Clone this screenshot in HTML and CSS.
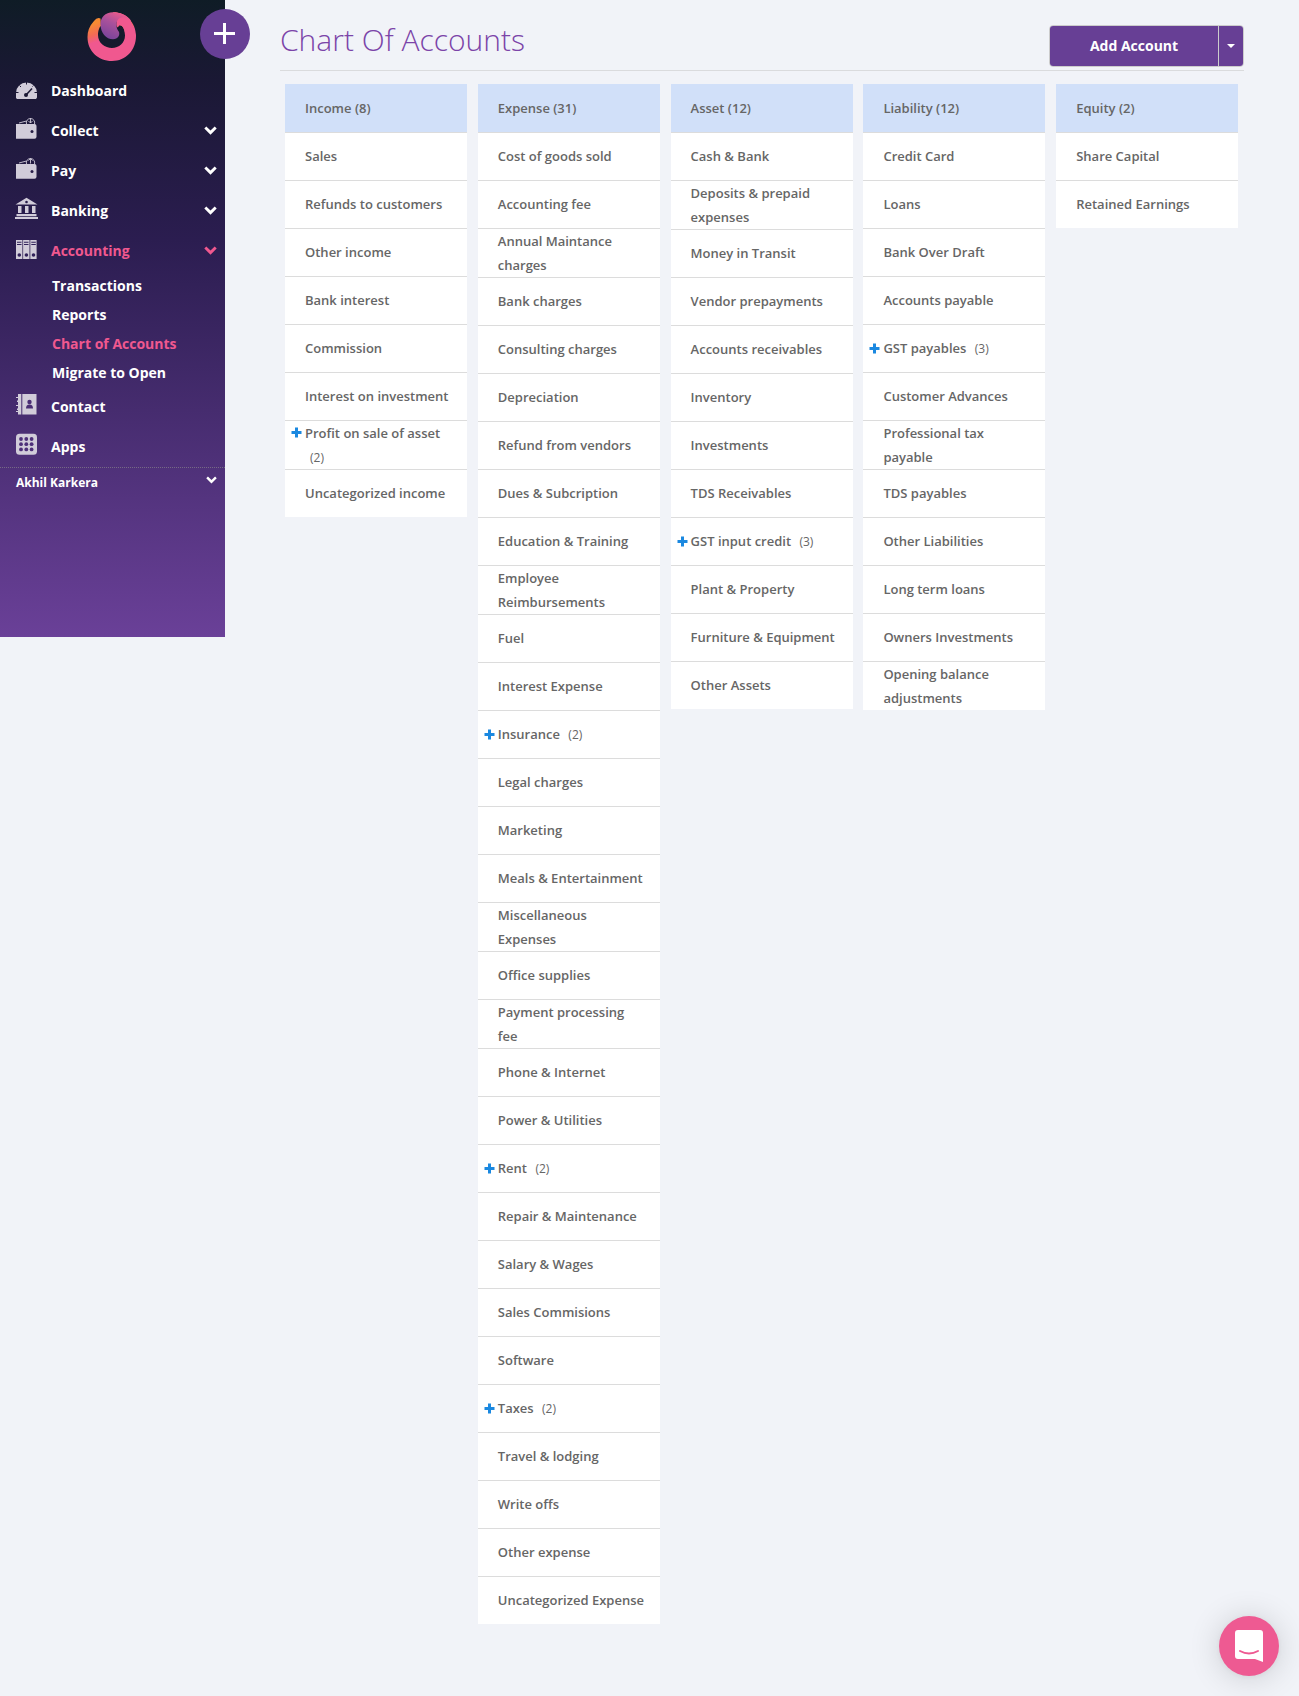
FILE: index.html
```html
<!DOCTYPE html>
<html lang="en">
<head>
<meta charset="utf-8">
<title>Chart Of Accounts</title>
<link rel="stylesheet" href="styles.css">
</head>
<body>
<svg class="defs" width="0" height="0" aria-hidden="true">
  <symbol id="chevron" viewBox="0 0 13 9"><path d="M.3 2.5 2.3.5l4.2 4.1L10.7.5l2 2-6.2 6.2z" fill="currentColor"/></symbol>
  <symbol id="plus" viewBox="0 0 11 11"><path d="M4 .5h3V4h3.5v3H7v3.500H4V7H.5V4H4z" fill="currentColor"/></symbol>
</svg>
<div class="app">
  <aside class="sidebar">
    <button class="create" aria-label="Create"><svg width="21" height="21" viewBox="0 0 21 21"><path d="M9 0h3v9h9v3h-9v9H9v-9H0V9h9z" fill="#fff"/></svg></button>
    <div class="brand">
      <svg width="49" height="50" viewBox="0 0 49 50">
        <defs>
          <linearGradient id="ring" x1="0" y1="0" x2=".35" y2="1"><stop offset=".25" stop-color="#f68b33"/><stop offset=".45" stop-color="#f26b55"/><stop offset=".6" stop-color="#f0588f"/></linearGradient>
          <linearGradient id="drop" x1=".85" y1="0" x2=".35" y2="1"><stop offset=".1" stop-color="#ea5a8d"/><stop offset=".5" stop-color="#a8519b"/><stop offset="1" stop-color="#7b449b"/></linearGradient>
        </defs>
        <path d="M13.500 6.500Q10 5 7 9 .5 16 .5 25C.5 39 11 49 25 49S49 38 49 24C49 10 38 .3 26 .3L30 10c-1 4 0 6 1 5 1-2 2-2 4-1 2 2 3 6 3 9.500C38 31 32 36 25 36S11 31 11 23c0-5 2-9 3-9z" fill="url(#ring)"/>
        <path d="M26 .3C33 .3 40 3 43.500 8L49 24 40 26 38 23C38 19 37 16 35 14 33 13 32 13 31 15 29 15 29 9 31 6z" fill="#f0588f"/>
        <path d="M26 .3C18 .3 13.500 6 13.500 12c0 9 5.500 15.300 12.500 15.300 5 0 7-4.300 6-7.300-1-2-2.500-3-2.500-7S31 6 35 5.500c3-.5 6 .5 8.500 2.500C38 2.500 32 .3 26 .3z" fill="url(#drop)"/>
      </svg>
    </div>
    <nav class="menu">
      <a class="item"><svg class="icon" viewBox="0 0 24 24"><path d="M1 21V16A10.500 10.500 0 0 1 22 16v4.500l-1 1.500H2z"/><g stroke="#1b1834" fill="none"><path d="M11.500 5v2.500M4.500 8.500l1.500 1.500M18.500 8.500l-1 1M1 15.500h2.500M22 15.500h-2.500"/><path d="M11 18l6-6.500" stroke-width="1.500"/></g><circle cx="11" cy="18" r="2" fill="#1b1834"/></svg><span>Dashboard</span></a>
      <a class="item"><svg class="icon" viewBox="0 0 24 24"><path d="M1 7h18.500q2 0 2 2v10.700q0 2-2 2H1z"/><path d="M4 6l7.500-2M11.500 7a4.200 4.200 0 1 1 8 0M15.500 1v5M13.500 4l2 2 2-2" fill="none" stroke="#d1ccd9" stroke-width=".9"/><circle cx="17" cy="14.500" r="1.500" fill="#251c43"/></svg><span>Collect</span><svg class="chev"><use href="#chevron"/></svg></a>
      <a class="item"><svg class="icon" viewBox="0 0 24 24"><path d="M1 7h18.500q2 0 2 2v10.700q0 2-2 2H1z"/><path d="M4 6l7.500-2M11.500 7a4.200 4.200 0 1 1 8 0M15.500 1.500v5M13.500 3.500l2-2 2 2" fill="none" stroke="#d1ccd9" stroke-width=".9"/><circle cx="17" cy="14.500" r="1.500" fill="#291d49"/></svg><span>Pay</span><svg class="chev"><use href="#chevron"/></svg></a>
      <a class="item"><svg class="icon" viewBox="0 0 24 24"><path fill-rule="evenodd" d="M11.500.8 22.500 7.500H.5zM11.500 3.700a1.300 1.300 0 1 0 .01 0zM3 9h3.500v7H3zM10 9h3.500v7H10zM17 9h3.500v7H17zM1.500 17h20v2.300h-20zM0 20h23v2H0z"/></svg><span>Banking</span><svg class="chev"><use href="#chevron"/></svg></a>
      <a class="item active"><svg class="icon" viewBox="0 0 24 24"><path d="M1 3h20.500v19H1z" opacity=".4"/><path d="M1 3h6v19H1zM8.200 3h6v19h-6zM15.500 3h6v19h-6z"/><g fill="#31215a"><path d="M2 4.800h4.500v1H2zM9 4.800h4.500v1H9zM16.300 4.800h4.500v1h-4.500zM2 7h4.500v1H2zM9 7h4.500v1H9zM16.300 7h4.500v1h-4.500z"/><circle cx="4.300" cy="18" r="1.800"/><circle cx="11.400" cy="18" r="1.800"/><circle cx="18.500" cy="18" r="1.800"/></g></svg><span>Accounting</span><svg class="chev"><use href="#chevron"/></svg></a>
      <div class="submenu">
        <a>Transactions</a>
        <a>Reports</a>
        <a class="active">Chart of Accounts</a>
        <a>Migrate to Open</a>
      </div>
      <a class="item"><svg class="icon" viewBox="0 0 24 24"><path d="M3 1h3.300v20.500H3zM7.300 1H21.500v20.500H7.300zM1 4h2v1H1zM2 7.500h2v1.500H2zM1 12h2v1H1zM2 15.500h2V17H2zM1 18h2v1H1z"/><g fill="#4a2e74"><circle cx="14.500" cy="9" r="2.200"/><path d="M11 15.500q0-4 3.500-4t3.500 4z"/></g></svg><span>Contact</span></a>
      <a class="item"><svg class="icon" viewBox="0 0 24 24"><rect x="1" y=".7" width="21" height="21" rx="3.500"/><g fill="#4e3079"><circle cx="6" cy="6" r="1.900"/><circle cx="11.300" cy="6" r="1.900"/><circle cx="16.600" cy="6" r="1.900"/><circle cx="6" cy="11.200" r="1.900"/><circle cx="11.300" cy="11.200" r="1.900"/><circle cx="16.600" cy="11.200" r="1.900"/><circle cx="6" cy="16.400" r="1.900"/><circle cx="11.300" cy="16.400" r="1.900"/><circle cx="16.600" cy="16.400" r="1.900"/></g></svg><span>Apps</span></a>
    </nav>
    <div class="user"><span>Akhil Karkera</span><svg class="chev"><use href="#chevron"/></svg></div>
  </aside>
  <main class="content">
    <header class="page-head">
      <h1>Chart Of Accounts</h1>
      <div class="split-button"><button class="add">Add Account</button><button class="caret" aria-label="More"></button></div>
    </header>
    <div class="columns">
      <section class="column">
        <h2>Income (8)</h2>
        <ul>
          <li><div>Sales</div></li>
          <li><div>Refunds to customers</div></li>
          <li><div>Other income</div></li>
          <li><div>Bank interest</div></li>
          <li><div>Commission</div></li>
          <li><div>Interest on investment</div></li>
          <li><div><svg class="plus"><use href="#plus"/></svg>Profit on sale of asset <span class="count">(2)</span></div></li>
          <li><div>Uncategorized income</div></li>
        </ul>
      </section>
      <section class="column">
        <h2>Expense (31)</h2>
        <ul>
          <li><div>Cost of goods sold</div></li>
          <li><div>Accounting fee</div></li>
          <li><div>Annual Maintance charges</div></li>
          <li><div>Bank charges</div></li>
          <li><div>Consulting charges</div></li>
          <li><div>Depreciation</div></li>
          <li><div>Refund from vendors</div></li>
          <li><div>Dues &amp; Subcription</div></li>
          <li><div>Education &amp; Training</div></li>
          <li><div>Employee Reimbursements</div></li>
          <li><div>Fuel</div></li>
          <li><div>Interest Expense</div></li>
          <li><div><svg class="plus"><use href="#plus"/></svg>Insurance <span class="count">(2)</span></div></li>
          <li><div>Legal charges</div></li>
          <li><div>Marketing</div></li>
          <li><div>Meals &amp; Entertainment</div></li>
          <li><div>Miscellaneous Expenses</div></li>
          <li><div>Office supplies</div></li>
          <li><div>Payment processing fee</div></li>
          <li><div>Phone &amp; Internet</div></li>
          <li><div>Power &amp; Utilities</div></li>
          <li><div><svg class="plus"><use href="#plus"/></svg>Rent <span class="count">(2)</span></div></li>
          <li><div>Repair &amp; Maintenance</div></li>
          <li><div>Salary &amp; Wages</div></li>
          <li><div>Sales Commisions</div></li>
          <li><div>Software</div></li>
          <li><div><svg class="plus"><use href="#plus"/></svg>Taxes <span class="count">(2)</span></div></li>
          <li><div>Travel &amp; lodging</div></li>
          <li><div>Write offs</div></li>
          <li><div>Other expense</div></li>
          <li><div>Uncategorized Expense</div></li>
        </ul>
      </section>
      <section class="column">
        <h2>Asset (12)</h2>
        <ul>
          <li><div>Cash &amp; Bank</div></li>
          <li><div>Deposits &amp; prepaid expenses</div></li>
          <li><div>Money in Transit</div></li>
          <li><div>Vendor prepayments</div></li>
          <li><div>Accounts receivables</div></li>
          <li><div>Inventory</div></li>
          <li><div>Investments</div></li>
          <li><div>TDS Receivables</div></li>
          <li><div><svg class="plus"><use href="#plus"/></svg>GST input credit <span class="count">(3)</span></div></li>
          <li><div>Plant &amp; Property</div></li>
          <li><div>Furniture &amp; Equipment</div></li>
          <li><div>Other Assets</div></li>
        </ul>
      </section>
      <section class="column">
        <h2>Liability (12)</h2>
        <ul>
          <li><div>Credit Card</div></li>
          <li><div>Loans</div></li>
          <li><div>Bank Over Draft</div></li>
          <li><div>Accounts payable</div></li>
          <li><div><svg class="plus"><use href="#plus"/></svg>GST payables <span class="count">(3)</span></div></li>
          <li><div>Customer Advances</div></li>
          <li><div>Professional tax payable</div></li>
          <li><div>TDS payables</div></li>
          <li><div>Other Liabilities</div></li>
          <li><div>Long term loans</div></li>
          <li><div>Owners Investments</div></li>
          <li><div>Opening balance adjustments</div></li>
        </ul>
      </section>
      <section class="column">
        <h2>Equity (2)</h2>
        <ul>
          <li><div>Share Capital</div></li>
          <li><div>Retained Earnings</div></li>
        </ul>
      </section>
    </div>
  </main>
</div>
<button class="chat" aria-label="Chat"><svg width="28" height="32" viewBox="0 0 28 32"><path d="M3 0h22q3 0 3 3v29l-8-3H3q-3 0-3-3V3q0-3 3-3z" fill="#fff"/><path d="M5 21q9 5 18 0" fill="none" stroke="#ee5a92" stroke-width="2" stroke-linecap="round"/></svg></button>
</body>
</html>
```
FILE: styles.css
```css
* { box-sizing: border-box; }
body {
  margin: 0;
  min-height: 1696px;
  background: #f1f3f8;
  color: #666;
  font: 600 13px/24px "Open Sans", sans-serif;
}
.defs { position: absolute; }
button { border: 0; padding: 0; font-family: inherit; }
.app { display: flex; align-items: flex-start; }

.sidebar {
  position: relative;
  flex: none;
  width: 225px;
  height: 637px;
  background: linear-gradient(#0f1c26 0, #1a1834 80px, #2b1d50 240px, #6a4098 637px);
  color: #fff;
}
.create {
  position: absolute;
  left: 199.5px;
  top: 8.5px;
  width: 50px;
  height: 50px;
  display: grid;
  place-items: center;
  border-radius: 50%;
  background: #673f95;
}
.brand { height: 71px; padding: 12px 0 0 87px; }
.brand svg { display: block; }
.item {
  display: flex;
  align-items: center;
  height: 40px;
  padding: 0 8px 0 15px;
  font-size: 14px;
  font-weight: 700;
}
.icon { width: 24px; height: 24px; margin-right: 12px; margin-top: -4px; fill: #d1ccd9; overflow: visible; }
.chev { width: 13px; height: 9px; margin-left: auto; margin-top: -2px; }
.active { color: #f0588f; }
.submenu { padding-left: 52px; font-size: 14px; font-weight: 700; }
.submenu a { display: block; height: 29px; line-height: 29px; }
.user {
  display: flex;
  align-items: center;
  height: 30px;
  padding: 0 8px 0 16px;
  border-top: 1px dotted #766985;
  font-size: 12px;
  font-weight: 700;
}
.user .chev { width: 11px; height: 8px; margin-top: -5px; }

.content { width: 964px; margin-left: 55px; }
.page-head {
  display: flex;
  justify-content: space-between;
  height: 71px;
  border-bottom: 1px solid #dadbdd;
}
h1 { margin: 16px 0 0; font-size: 30px; line-height: 48px; font-weight: 300; color: #7b44a8; }
.split-button {
  display: flex;
  width: 195px;
  height: 42px;
  margin-top: 25px;
  border: 1px solid #ccc;
  border-radius: 4px;
  overflow: hidden;
}
.split-button button { background: #673f95; color: #fff; }
.split-button .add { flex: 1; padding-bottom: 2px; font-size: 14px; font-weight: 700; }
.split-button .caret { width: 25px; border-left: 1px solid #ccc; display: grid; place-items: center; }
.caret::before { content: ""; border: 4px solid transparent; border-top-color: #fff; border-bottom: 0; }

.columns {
  display: grid;
  grid-template-columns: repeat(5, 182px);
  column-gap: 10.8px;
  align-items: start;
  padding: 13px 0 0 5px;
}
h2 { margin: 0; height: 48px; padding-left: 20px; background: #d1e0f9; font-size: 13px; line-height: 48px; font-weight: 600; }
ul { margin: 0; padding: 0; list-style: none; background: #fff; }
li {
  display: flex;
  align-items: center;
  min-height: 48px;
  padding: 0 15px 0 20px;
  border-top: 1px solid #dcdcdc;
}
li div { position: relative; top: -.4px; }
.plus { position: absolute; left: -14px; top: 6.6px; width: 11px; height: 11px; color: #1a88e0; }
.count { margin-left: 5px; font-size: 12px; line-height: 1; font-weight: 400; }

.chat {
  position: fixed;
  left: 1219px;
  top: 1616px;
  width: 60px;
  height: 60px;
  display: grid;
  place-items: center;
  border-radius: 50%;
  background: #ee5a92;
  box-shadow: 0 1px 6px rgba(0, 0, 0, .06), 0 2px 32px rgba(0, 0, 0, .16);
}
```
